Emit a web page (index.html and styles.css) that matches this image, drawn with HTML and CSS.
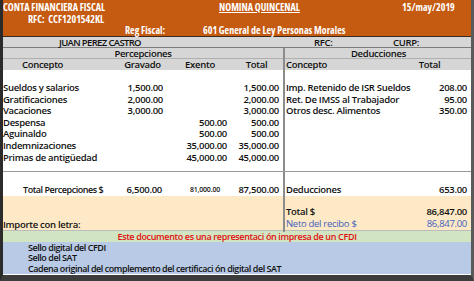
FILE: index.html
```html
<!DOCTYPE html>
<html lang="es">
<head>
<meta charset="utf-8">
<title>Nómina quincenal</title>
<link rel="stylesheet" href="styles.css">
</head>
<body>
<div class="sheet">
  <header class="hdr">
    <div class="hrow h1">
      <span class="co">CONTA FINANCIERA FISCAL</span>
      <span class="title">NOMINA QUINCENAL</span>
      <span class="date">15/may/2019</span>
    </div>
    <div class="hrow h2"><span class="rfc">RFC:&nbsp;&nbsp;CCF1201542KL</span></div>
    <div class="hrow h3"><span class="reg">Reg Fiscal:</span><span class="regv">601 General de Ley Personas Morales</span></div>
  </header>

  <div class="row gray emp">
    <span class="emp-name">JUAN PEREZ CASTRO</span>
    <span class="emp-rfc">RFC:</span>
    <span class="emp-curp">CURP:</span>
  </div>

  <div class="row grid gray sect">
    <span class="span4 center">Percepciones</span>
    <span class="span2 center div">Deducciones</span>
  </div>

  <div class="row grid gray colh">
    <span class="c1h">Concepto</span>
    <span class="center">Gravado</span>
    <span class="center">Exento</span>
    <span class="center">Total</span>
    <span class="div">Concepto</span>
    <span class="center">Total</span>
  </div>

  <div class="row grid blank12"><span></span><span></span><span></span><span></span><span class="div"></span><span></span></div>

  <div class="row grid data"><span>Sueldos y salarios</span><span class="num">1,500.00</span><span class="num"></span><span class="num">1,500.00</span><span class="div">Imp. Retenido de ISR Sueldos</span><span class="num">208.00</span></div>
  <div class="row grid data"><span>Gratificaciones</span><span class="num">2,000.00</span><span class="num"></span><span class="num">2,000.00</span><span class="div">Ret. De IMSS al Trabajador</span><span class="num">95.00</span></div>
  <div class="row grid data"><span>Vacaciones</span><span class="num">3,000.00</span><span class="num"></span><span class="num">3,000.00</span><span class="div">Otros desc. Alimentos</span><span class="num">350.00</span></div>
  <div class="row grid data"><span>Despensa</span><span class="num"></span><span class="num">500.00</span><span class="num">500.00</span><span class="div"></span><span class="num"></span></div>
  <div class="row grid data"><span>Aguinaldo</span><span class="num"></span><span class="num">500.00</span><span class="num">500.00</span><span class="div"></span><span class="num"></span></div>
  <div class="row grid data"><span>Indemnizaciones</span><span class="num"></span><span class="num">35,000.00</span><span class="num">35,000.00</span><span class="div"></span><span class="num"></span></div>
  <div class="row grid data"><span>Primas de antigüedad</span><span class="num"></span><span class="num">45,000.00</span><span class="num">45,000.00</span><span class="div"></span><span class="num"></span></div>

  <div class="row grid blank-end"><span></span><span></span><span></span><span></span><span class="div"></span><span></span></div>
  <div class="row grid blank-top"><span></span><span></span><span></span><span></span><span class="div"></span><span></span></div>

  <div class="row grid totals">
    <span class="tp">Total Percepciones $</span>
    <span class="num">6,500.00</span>
    <span class="num small">81,000.00</span>
    <span class="num">87,500.00</span>
    <span class="div">Deducciones</span>
    <span class="num">653.00</span>
  </div>

  <div class="yellow">
    <div class="row grid y-blank"><span class="span4"></span><span class="span2 div"></span></div>
    <div class="row grid y-row"><span class="span4"></span><span class="div">Total $</span><span class="num">86,847.00</span></div>
    <div class="row grid y-row"><span class="span4 importe">Importe con letra:</span><span class="div neto">Neto del recibo $</span><span class="num neto">86,847.00</span></div>
  </div>

  <div class="row green">Este documento es una representaci ón impresa de un CFDI</div>

  <div class="blue">
    <div class="brow">Sello digital del CFDI</div>
    <div class="brow">Sello del SAT</div>
    <div class="brow">Cadena original del complemento del certificaci ón digital del SAT</div>
  </div>
</div>
</body>
</html>
```
FILE: styles.css
```css
html, body { margin: 0; padding: 0; background: #ffffff; }

.sheet {
  width: 474px;
  height: 281px;
  box-sizing: border-box;
  border-left: 3px solid #2b2b2b;
  border-right: 3px solid #5a5a5a;
  border-bottom: 6px solid #3c3c3c;
  font-family: "Open Sans", "DejaVu Sans", sans-serif;
  font-stretch: 91%;
  font-weight: 600;
  font-size: 9.5px;
  letter-spacing: -0.3px;
  color: #111;
  overflow: hidden;
}

/* ---------- orange header ---------- */
.hdr {
  background: #c55a11;
  color: #fff;
  font-weight: 700;
  font-stretch: 75%;
  font-size: 10px;
  letter-spacing: 0;
  border-bottom: 1px solid #3a2a20;
}
.hrow { display: flex; align-items: center; white-space: nowrap; }
.h1 { height: 13px; }
.h2 { height: 11px; }
.h3 { height: 12px; }
.co { width: 215px; }
.title { width: 180px; text-decoration: underline; padding-left: 1px; }
.date { padding-left: 3px; }
.rfc { padding-left: 25px; }
.reg { padding-left: 122px; width: 78px; }

/* ---------- rows ---------- */
.row { box-sizing: border-box; white-space: nowrap; }
.grid {
  display: grid;
  grid-template-columns: 112px 55px 60px 53px 105px 83px;
}
.span4 { grid-column: span 4; }
.span2 { grid-column: span 2; }
.center { text-align: center; }
.num { text-align: right; padding-right: 4px; }
.div { border-left: 2px solid #8c8c8c; padding-left: 1px; }

.gray { background: #d6d6d6; }

.emp {
  height: 11px;
  line-height: 11px;
  display: flex;
  border-bottom: 1px solid #7d7d7d;
}
.emp-name { width: 208px; padding-left: 56px; box-sizing: border-box; letter-spacing: -0.65px; }
.emp-rfc { width: 182px; padding-left: 103px; box-sizing: border-box; }

.sect { height: 11px; line-height: 11px; border-bottom: 1px solid #b0b0b0; }
.colh { height: 11px; line-height: 11px; }
.c1h { padding-left: 19px; }

.blank12 { height: 12px; }

.data { height: 11.6px; line-height: 11.6px; }
.data .num:nth-child(2) { padding-right: 7px; }
.data .num:nth-child(3) { padding-right: 3px; }

.blank-end { height: 8.8px; border-bottom: 1px solid #9a9a9a; }
.blank-top { height: 12px; }

.totals { height: 12px; line-height: 12px; }
.tp { padding-left: 20px; font-size: 9px; letter-spacing: -0.45px; }
.totals .num:nth-child(2) { padding-right: 8px; }
.small { font-size: 7px; padding-right: 10px !important; letter-spacing: -0.2px; }

/* ---------- yellow area ---------- */
.yellow { background: #fde9c5; }
.y-blank { height: 10px; }
.y-row { height: 12px; line-height: 12px; }
.neto { color: #3f5fbf; font-weight: 500; }
.importe { line-height: 14px; }

/* ---------- green / blue ---------- */
.green {
  background: #d2e5c2;
  height: 12px;
  line-height: 12px;
  color: #e01010;
  text-align: center;
  font-size: 9px;
  letter-spacing: -0.35px;
  border-top: 1px solid #bcbcbc;
}
.blue { background: #b8cae5; padding-top: 1px; font-size: 9px; letter-spacing: -0.45px; }
.brow { height: 10.5px; line-height: 10.5px; padding-left: 25px; }
```
